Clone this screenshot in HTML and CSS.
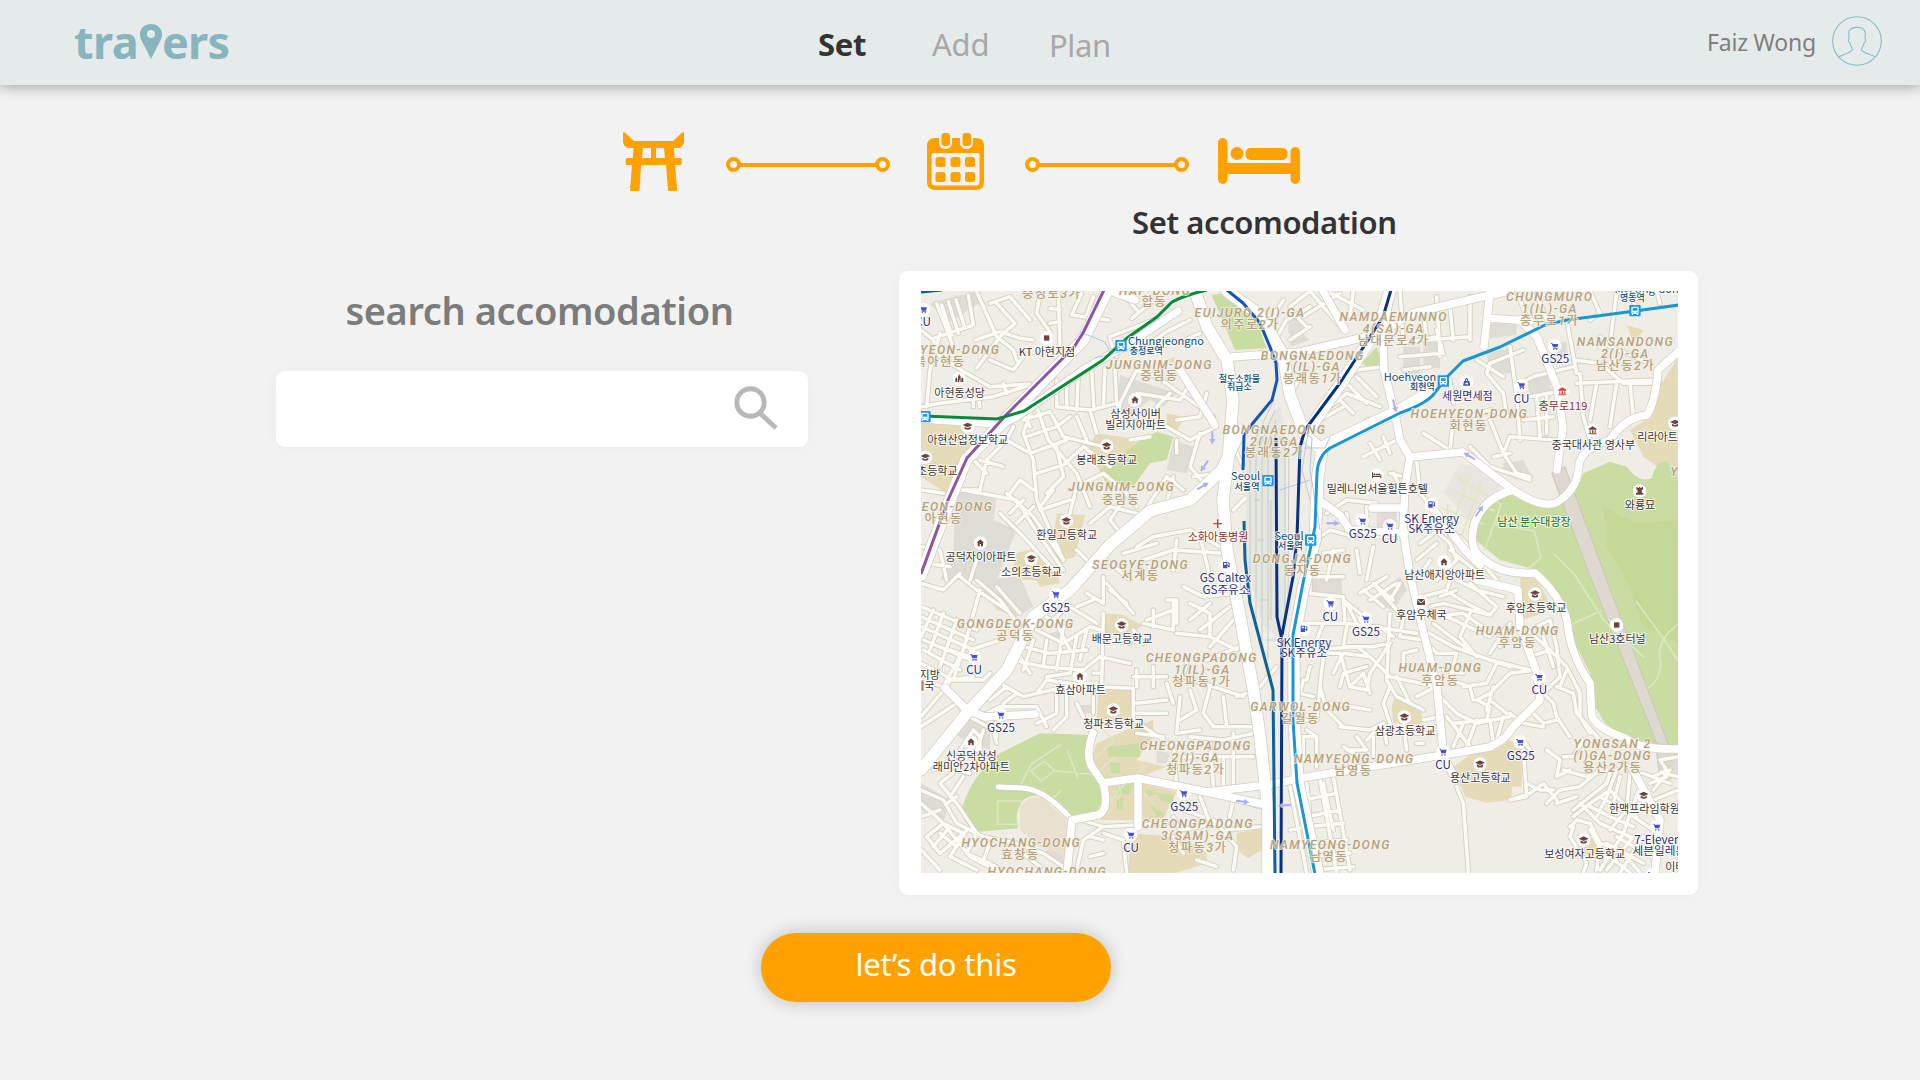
FILE: index.html
```html
<!DOCTYPE html>
<html lang="en">
<head>
<meta charset="utf-8">
<title>travers – Set accomodation</title>
<link rel="stylesheet" href="styles.css">
</head>
<body>
<header class="topbar">
  <a class="logo" aria-label="travers"><span class="logo-a">tra</span><svg class="pin" viewBox="0 0 22 36"><path fill-rule="evenodd" d="M11 0C4.500 0 0 4.600 0 10.500 0 15 3 19 5.500 24L11 35 16.500 24C19 19 22 15 22 10.500 22 4.600 17.500 0 11 0ZM11 6a4 4 0 1 1 0 8 4 4 0 0 1 0-8Z"/></svg><span class="logo-b">ers</span></a>
  <nav class="tabs"><a class="tab active">Set</a><a class="tab add">Add</a><a class="tab plan">Plan</a></nav>
  <div class="user"><span class="user-name">Faiz Wong</span>
    <svg class="avatar" viewBox="0 0 50 50"><circle cx="25" cy="25" r="24.300"/><path d="M7 41C10 38 18 38 20.500 33.500 20 31 18.500 30 18 27 16 26 16 23 17 22 17 18 15.500 15 18 14 20 11 29 10 32 14 34.500 16 33 19 33 22 34 23 34 26 32 27 31.500 30 30 31 29.500 33.500 31 38 40 38 43 41"/></svg></div>
</header>
<main>
  <section class="steps">
    <div class="step-row">
      <svg class="torii" viewBox="0 0 61 59"><path d="M0 0.500Q1.500-.5 3 1.500L11 9H50L58 1.500Q60-.5 61 .5V10Q60 16 54 16H51L51.700 26H58Q58.700 26 58.700 27V31.500Q58.700 33 57 33H52L54.200 58Q54.200 59 53 59H46Q45 59 45 58L43 33H18L16.500 58Q16.500 59 15.500 59H8Q7 59 7 58L9 33H4Q2.700 33 2.700 31.500V27.500Q2.700 26 4 26H9.700L10.500 16H7Q1 16 0 10ZM20 16L19 26H28V16ZM33 16V26H42L41 16Z" fill-rule="evenodd"/></svg>
      <svg class="link" viewBox="0 0 164 15"><path d="M12 8H152"/><circle cx="7.500" cy="7.500" r="5.500"/><circle cx="156.500" cy="7.500" r="5.500"/></svg>
      <svg class="calendar" viewBox="0 0 57 57"><path fill-rule="evenodd" d="M8 5H12V9Q12 16 18.500 16T25 9V5H33V9Q33 16 39.500 16T46 9V5H49Q57 5 57 13V49Q57 57 49 57H8Q0 57 0 49V13Q0 5 8 5ZM7 20Q4.500 20 4.500 22V49Q4.500 52.500 8 52.500H49Q52.500 52.500 52.500 49V22Q52.500 20 50.500 20Z"/><rect x="14.500" y="0" width="8.500" height="13" rx="3"/><rect x="35.500" y="0" width="8.500" height="13" rx="3"/><g><rect x="8.500" y="24" width="10" height="10" rx="2.500"/><rect x="23.500" y="24" width="10" height="10" rx="2.500"/><rect x="38" y="24" width="10" height="10" rx="2.500"/><rect x="8.500" y="39" width="10" height="10" rx="2.500"/><rect x="23.500" y="39" width="10" height="10" rx="2.500"/><rect x="38" y="39" width="10" height="10" rx="2.500"/></g></svg>
      <svg class="link" viewBox="0 0 164 15"><path d="M12 8H152"/><circle cx="7.500" cy="7.500" r="5.500"/><circle cx="156.500" cy="7.500" r="5.500"/></svg>
      <svg class="bed" viewBox="0 0 82 46"><rect width="9.500" height="46" rx="4.700"/><rect x="72.500" y="9" width="9.500" height="37" rx="4.700"/><rect x="5" y="25" width="72" height="11"/><circle cx="19" cy="15.500" r="6.500"/><rect x="27.500" y="10" width="42" height="12" rx="5"/></svg>
    </div>
    <h1 class="step-title">Set accomodation</h1>
  </section>
  <section class="content">
    <div class="search">
      <h2>search accomodation</h2>
      <div class="search-box"><svg viewBox="0 0 44 44"><circle cx="16.500" cy="16.500" r="13.700"/><path d="M27 28L42 42"/></svg></div>
    </div>
    <div class="map-card">
<svg class="map" viewBox="0 0 2271 1746">
<defs>
  <g id="streets">
    <g transform="translate(-93 -93)">
      <path d="M190 260L140 130M130 235L250 195L235 105M155 135L185 225M175 125L205 220M198 120L225 205M260 95L320 230L370 270L380 300M255 240L330 215L390 235L430 240M300 130L360 110L420 180M320 130L375 190L330 230L260 325M110 440L120 330L150 220M230 340L300 380L420 372M230 340L150 290L130 240L93 210M300 300L370 330L400 290M505 100L510 260M575 100L545 165L655 180M610 110L590 165M480 145L510 150M480 190L510 185M450 100L440 160L480 215M700 100L740 150M725 175L780 130M660 230L740 200L800 175M780 250L830 215L900 180M860 250L930 220M680 290L660 240M93 440L150 430L310 410L420 375M270 440L260 390M350 400L340 370M250 440V400"/>
      <path d="M430 430L400 520L430 600L440 720L520 900M440 440L475 540L560 640L600 740M500 360V440L600 450L680 430L675 330M530 360V445M565 340L560 450M605 330L612 450M645 325L640 440M400 480L480 455L520 530L640 560M410 530L500 500L540 470M420 580L530 540M440 640L520 615L580 560L660 620M470 700L520 650L500 560M540 760L560 680L640 640L700 690L740 740M450 750L540 720M600 790L660 740L740 760M520 900L430 770L350 700M600 450L620 520M680 430L700 480L830 500M680 500L690 430L740 330L800 350L970 470M740 400L870 420L900 370M800 440L840 400M830 500L900 540L980 500M860 480L930 470L950 400M720 540L780 530M560 470L590 540M380 420L420 500"/>
      <path d="M210 690L270 690L290 600L350 540L420 580M270 600L340 620M290 640L250 600M350 540L370 500M220 690L380 720L430 800L520 930M360 700L390 660L430 690M360 760L400 720M380 790L430 740M330 760L410 840L500 940M93 690L160 700M93 860L150 870L170 960M110 910L180 920M240 960L260 900M450 740L490 690M700 720L660 780L700 830L760 780M760 760L830 650L880 690M830 730L850 650M930 520L900 620L950 680M910 650L980 640M860 540V580M740 860L790 830L900 810L990 860M700 880L800 850M760 900L850 870L1000 880M860 840L850 930M930 830L960 950M650 900L720 960M560 870L600 910M1030 750L1080 700V640M1030 560L1070 640M1150 250L1190 180L1260 140M1130 200L1180 120M1200 240L1260 200"/>
    </g>
    <g transform="translate(1107 -93)">
      <path d="M60 93L160 210M110 93L220 150M40 170L150 100M0 140L60 93M190 93L180 170M330 93L340 250M440 110L450 290M400 150L410 240L540 230M480 140L490 240M540 110V240M340 250L440 230M330 290L460 280L440 210M340 330L420 320M680 93L720 200M740 100L770 180M900 93L930 160L900 180M980 100L960 250M1010 100L1040 140M1100 93L1110 130M830 180L860 340M850 300L930 310L1000 370H1110M730 350L850 320M690 370L740 345M720 410L800 395M860 370L1100 360M870 340L880 470L900 540M920 370L900 480M980 370L960 500M1020 370L1030 470M930 230L960 260L1080 310M600 310L590 340L640 400L650 470M660 260L680 410L690 540M560 300L640 350M480 360L490 430M540 470L600 450L660 470M600 480L640 580L680 640L720 650M640 580L660 530L800 540M740 410L750 530M700 480L790 470M770 400V520M540 560L600 620L720 660M610 590L660 580"/>
      <path d="M110 410L200 330L280 320M120 440L170 400L270 440M140 410L190 460M170 370L230 430M200 350L260 410M90 480L160 440M220 590L320 540M240 550L270 600M280 530L300 580M300 640L340 650M310 640L340 700M110 760L170 720L260 730M90 830L120 810L190 830L340 830M170 760L180 830M100 880L160 870M110 960L130 870M230 830V740H340M250 740H340M400 780L480 850L500 900L440 960M380 600L390 700L480 800M390 850L460 800M380 900L440 850M480 870L590 960M510 830L620 960M380 960L420 900M230 960L250 860M200 870L210 940M400 520L480 570L490 480M600 310L700 270M230 480L300 470M0 150L50 200M0 410L30 350"/>
    </g>
    <g transform="translate(-93 837)">
      <path d="M93 40L160 60L210 10M93 110L260 180M93 140L250 210M93 170L240 235M100 210L230 265M100 240L210 300M93 280L190 330M160 130L120 240M200 150L150 290M240 175L190 330M130 120L93 200M270 60L220 240L160 350M260 30L330 90L390 170M320 50L390 130M210 20L260 60L350 120M250 320L180 330L170 350L225 435M170 350L93 440M93 470L200 400M160 350L93 330M240 240L330 210M180 240L240 260M190 330L280 330L300 310M450 130L500 160L540 240M440 180L520 220L600 170L630 180M400 230L480 250L590 240M370 270L460 290L580 300L630 260M390 260L420 310M430 210L400 300M470 210L460 290M520 170L500 300M560 200L540 310M590 180L570 270M540 110L620 160M590 70L640 100V20M560 110L610 90M660 60L710 100M480 160L530 110M650 40L730 130M330 340L400 380L440 370L580 340H620M350 350L300 390M340 400L380 370M270 440L330 410H440L470 470M440 370L470 330L610 350V430M500 360V430L440 460M530 360V440L490 480M560 400L580 440M470 320L540 310"/>
      <path d="M640 130L635 350M610 310H630M620 350L730 355V450M630 260L720 280M660 210L720 220M730 180L760 220M760 160L850 180M790 120V170M850 90V180M770 150L850 120M830 90H860V160M730 320H830M740 300V350M790 290V350M830 340L850 400M740 400L830 390M740 430H830M860 190L960 200L1040 240M900 100L960 130V200M900 150L960 100M930 180L1020 110M960 230L1030 150M880 50L940 80L1030 70M950 270L1050 230M890 280L880 320L1060 380M870 380L860 490L930 480M900 360L920 420L870 450M960 350L940 430L970 470H1090M1000 380L1010 470M900 500L1000 510L1090 490M730 450L850 530M740 490L820 500M850 520L860 650M880 560L1090 560M960 520L970 650M1030 490V640M840 520H890M900 600H1000M1000 570V650M1110 350L1160 290M1040 380L1100 360M540 740L640 770L830 760M640 770L580 810L560 900M640 790L700 810L710 908M600 800L640 810M600 860L640 850M850 740L870 780L990 760M880 720L940 740M930 680L960 760M1030 690L1010 780L1110 770M1040 690L1110 710M970 750L1040 830L1030 900M920 870L980 890M850 800L880 850"/>
      <path d="M93 660L160 690L200 760L280 800L380 820L460 850L520 890M150 640L200 700L260 790M93 700L160 760L240 860L330 908M130 600L250 530M200 600L150 640M220 620L180 680M240 610L200 600M170 700L200 680M160 760L220 790L150 850L110 800L160 760M150 790L200 830M180 770L130 830M230 780L180 860L260 900M260 790L230 850L300 880M210 540L250 480L270 500V540M240 440L310 480L320 520M280 480L260 540M320 440V500M93 740L150 720M93 840L150 900M300 820L280 870L350 908M400 850L450 890"/>
    </g>
    <g transform="translate(1107 837)">
      <path d="M50 70L160 80L165 160H40M60 70V20H160M100 160L80 210M165 160L250 170L380 190M170 170L160 230L250 230M200 160L170 100M160 90L210 130M210 70L290 20M220 60L280 110M240 90L320 40M260 50L310 90M250 40L320 120M300 130L290 330M330 40L300 90M340 140L330 200L400 210M250 230L300 220M310 200L270 170M400 80L470 60L480 30M450 80L500 60M500 30L560 60L640 80M480 70L530 100L600 135M540 40L620 110L600 135L460 100M420 110L460 100M420 140L520 130L590 180M400 180L490 230L600 270L720 300M400 210L440 250L500 250M430 160L550 250M470 140L600 200M630 230L660 160M600 250L650 170M540 130L510 200L560 260M600 270L660 290M380 240L340 250V300M500 250L480 330L540 350L550 390M460 300L520 310M520 350L590 340L620 280M560 390L600 370L660 310L740 300M590 420L610 350M600 390L650 430M560 390L600 410L590 450L490 460M450 380L500 430L560 460L660 440M500 480L540 530M520 460L490 530M560 450L530 530M600 450L610 520M640 440L620 510M660 430L700 460L760 470M720 420L760 460L800 450M740 170L780 150L800 230L810 320L760 370M780 240L720 260M760 200L790 290M700 170L780 240M760 220L830 290L870 370L870 440L900 490M800 350L850 370L860 430L930 510M830 300L810 350M760 370L790 400L800 440L840 500"/>
      <path d="M40 330L30 370L70 380M60 290L50 330M80 220L100 260L90 350L110 420L160 470M110 250H150L180 350M60 240L200 230L240 260M130 310L160 250L240 260M150 350L160 310L230 290M180 350L220 310L240 370M120 400L240 420M300 220L240 310L230 360L180 350M240 260L300 320L440 350M290 330L320 380L400 420M320 320L360 400M300 350L280 400L300 460M90 350L80 450L40 450M50 480L80 500V590M150 470L240 480L280 460L290 520M200 500L230 540L170 540M280 460L230 510M340 460L350 540M370 490L450 490M380 520H400M400 450L450 440M190 550L160 530M250 500V560M40 510V570M20 500H80M470 440L510 490L540 530M380 380L440 350M130 620L180 900M90 630L140 908M50 640L60 740M40 690L140 670M50 740L150 720M50 770L160 760M60 820L170 810M60 860L180 850M70 900L190 890M100 640L130 780M0 650L50 908M0 780L50 770M500 650L520 700L535 908"/>
      <path d="M700 540L710 680L660 690M660 690L720 670L760 640L800 690M700 510L720 540M770 540L810 570L800 620L840 600M820 560H850M770 700L810 660L870 650L940 590M790 660L750 660L710 640M860 680L800 700M850 560L880 510M820 600L890 620L950 600M850 720L950 640L960 610M850 740L900 700L960 660M870 700L930 760L1020 800M900 710L960 740L1030 770M930 680L1000 720L1090 780M960 660L1040 740M980 600L950 680L920 740M990 620L970 700M1020 610L1010 720L960 780M1050 650L1000 790M840 770L860 750L900 760L930 820L990 840M850 770L840 800L890 880L880 908M900 780L950 870M930 820L920 900M1000 790L930 900M1030 800L950 900M1060 800L990 908M950 820L1060 880M960 860L1020 908M980 800L1100 870M1000 850L1050 908M1090 620L1130 600L1110 570L1164 560M1060 610L1140 640M1080 640L1130 620M1090 660L1140 600M1090 690L1164 660M1090 720L1164 700M1120 610L1164 620M1000 580L1050 610"/>
    </g>
  </g>
  <g id="avenues" transform="scale(3) translate(-921 -291)">
    <path d="M1390 291L1383 340L1384 370L1395 415L1400 440L1410 457L1405 487L1403 530L1410 575L1423 630L1437 687L1443 750"/>
    <path d="M1410 457L1463 452L1513 490Q1547 512 1560 500Q1578 488 1579 465Q1580 450 1610 440Q1625 417 1647 415Q1656 400 1658 370L1678 352"/>
    <path d="M1513 490Q1485 497 1475 522Q1467 548 1482 558Q1500 575 1535 573Q1560 595 1567 620Q1570 655 1590 683L1592 717Q1600 730 1625 738Q1640 750 1678 749"/>
    <path d="M1557 470L1563 427L1557 387L1537 337L1520 320M1487 318L1530 321M1490 291L1484 347M1110 291L1135 300M1233 357L1300 352L1370 336M1385 330L1413 313L1477 298L1510 291M1323 291L1345 330M1178 311L1127 345L1083 370L1027 410M921 419L1000 424Q1020 418 1030 405"/>
    <path d="M1103 783L1137 778L1207 792L1262 804M1207 792L1267 785L1307 777L1443 755L1490 747Q1505 740 1512 728L1540 700L1537 673L1520 627L1518 590L1477 580M1093 733Q1085 755 1092 767L1103 783Q1110 810 1098 815L1072 820L1067 873M1138 783V827M1633 770L1660 820L1655 873M967 710L985 717L1035 714M945 688L967 710M1180 370L1215 425"/>
    <path d="M1317 470L1319 500L1340 515L1350 530L1405 533M1372 508L1403 508M1430 505L1465 550L1480 565M1443 755L1456 780"/>
  </g>
  <g id="trunks" transform="scale(3) translate(-921 -291)">
    <path d="M1107 291L1083 340L1010 415L966 460L946 510L921 575M1195 291L1207 327L1227 360L1233 400L1228 460L1223 500L1227 550L1235 590L1253 687L1260 737L1268 810V873M1240 430L1222 470L1190 500L1150 511L1110 545L1070 590L1033 617L1007 670L967 713L921 770M1227 291L1260 315L1283 355L1290 395L1305 435L1322 450L1318 475L1315 540L1303 590L1294 640V720L1298 783L1318 873M1322 447L1400 410L1430 392M1390 291L1380 325L1340 385L1305 435"/>
  </g>
  <g id="lanes" transform="scale(3) translate(-921 -291)"><path d="M1072 820Q1045 789 1022 788L998 787"/></g>
  <g id="cap"><circle r="20" class="halo"/><path d="M-15-4L0-11L15-4L0 3ZM-9 1V8Q0 13 9 8V1L0 6Z"/></g>
  <g id="cart"><circle r="20" class="halo"/><path d="M-12-9H-7L-6-6H11L8 4H-5L-9-7H-12ZM-5 6H9V8H-5Z"/><circle cx="-3" cy="10" r="2"/><circle cx="6" cy="10" r="2"/></g>
  <g id="home"><circle r="20" class="halo"/><path d="M0-11L11-1H8V10H2V3H-2V10H-8V-1H-11Z"/></g>
  <g id="square"><circle r="20" class="halo"/><path d="M-8-8H8V8H-8Z"/></g>
  <g id="mail"><circle r="20" class="halo"/><path d="M-12-9H12L0 1ZM-12-6L0 4L12-6V9H-12Z"/></g>
  <g id="hotel"><circle r="20" class="halo"/><path d="M-14-9H-11V1H11V-3H14V9H11V5H-11V9H-14ZM-3-5H10V-1H-3Z"/><circle cx="-7" cy="-3" r="3"/></g>
  <g id="bag"><circle r="20" class="halo"/><path fill-rule="evenodd" d="M-8-3H-5Q-5-12 0-12T5-3H8L11 11H-11ZM-2-3H2Q2-8 0-8T-2-3ZM-4 2V7H4V2Z"/></g>
  <g id="rook"><circle r="20" class="halo"/><path d="M-10-12H-6V-9H-2V-12H2V-9H6V-12H10V-4H6L7 6H11V11H-11V6H-7L-6-4H-10Z"/></g>
  <g id="church"><circle r="20" class="halo"/><path d="M0-13L4-6V10H1V3H-1V10H-4V-6ZM-12 0L-9-4L-6 0V10H-12ZM6 0L9-4L12 0V10H6Z"/></g>
  <g id="fuel"><circle r="20" class="halo"/><path fill-rule="evenodd" d="M-9-10H4V0H8V-5L5-8L7-10L11-6V5H6V2H4V9H-9ZM-6-7V-2H1V-7Z"/></g>
  <g id="hall"><circle r="20" class="halo"/><path d="M0-13L12-6V-3H-12V-6ZM-9-1H-6V7H-9ZM-2-1H2V7H-2ZM6-1H9V7H6ZM-12 8H12V11H-12Z"/></g>
  <g id="train"><rect x="-17" y="-17" width="34" height="34" rx="3" fill="#1c97ea"/><path fill="#fff" fill-rule="evenodd" d="M-8-12H8Q11-12 11-8V6Q11 9 8 9L11 13H7L4 10H-4L-7 13H-11L-8 9Q-11 9-11 6V-8Q-11-12-8-12ZM-7-8V0H7V-8ZM-8 3V6H-4V3ZM4 3V6H8V3Z"/></g>
  <g id="arrow"><path d="M-20-3H4V-9L20 0L4 9V3H-20Z"/></g>
</defs>
<rect width="2271" height="1746" fill="#f0ede6"/>

<g class="areas" transform="translate(-93 -93)">
  <path class="grey" d="M120 130L250 95L270 130L170 190ZM200 690L320 715L310 780L380 810L320 960H150L190 870ZM690 345L860 400L820 440L780 420L700 480L680 440ZM850 540L910 560L890 640L830 630ZM1195 165L1250 190L1240 235L1195 220Z"/>
  <path class="tan" d="M93 490L240 500L245 570L170 700L93 650ZM620 520L755 540L740 590L640 650L590 570ZM830 460L880 470L860 520L830 500ZM500 760L585 765L555 890L505 905L490 830ZM380 880L430 865L500 960H400L370 920ZM830 300L855 290L850 310Z"/>
  <path class="green" d="M755 540L800 515L850 530L830 600L780 610L730 680L650 675L630 630ZM965 105L1030 95L1085 140L1130 265L1035 270Z"/>
</g>
<g class="areas" transform="translate(1107 -93)">
  <path class="grey" d="M340 260H390V350H340ZM400 240L450 240V325H400ZM600 190L680 185V225L600 235ZM590 280L660 265L665 340H600ZM710 350L775 345L785 390L720 410ZM800 250L830 245V290H800ZM640 610L700 600L720 640L680 660L640 640ZM260 755L320 750V810H260ZM0 190L60 240L0 260Z"/>
  <path class="tan" d="M1164 290V680L1130 640L1060 590L1020 510L1080 470L1110 380ZM1010 195L1060 210L1030 250Z"/>
  <path class="pale" d="M510 610L600 630L640 660L560 800L460 700Z"/>
  <path class="green" d="M545 830Q550 740 620 705L690 700L780 745L850 710L880 640L960 605L1010 620Q1045 670 1085 655Q1100 600 1130 605L1164 650V1470L1050 1460L945 1390L915 1340L900 1240L850 1140L800 1000L740 930L630 900ZM215 310L260 260L275 310L240 325Z"/>
  <path class="green2" d="M1164 780V1150L1060 1100L1010 960L950 860L940 740L1040 790Z"/>
  <path class="tunnel" d="M785 640L825 620L950 960L1137 1460L1100 1450L895 935Z"/>
  <path class="tunnel" d="M1100 1480L1164 1460V1500L1110 1560Z"/>
</g>
<g class="areas" transform="translate(-93 837)">
  <path class="grey" d="M260 30L390 20L430 110L380 140L320 120ZM480 190L520 180L530 200L510 220ZM565 405H610V430H565ZM93 640L180 690L160 760L93 720ZM190 490L250 440L300 480V540L240 520ZM800 540L840 550L830 580H800ZM450 850L520 820V890Z"/>
  <path class="tan" d="M645 130L700 135L755 165L720 200L640 190ZM625 355L725 360V450L620 470ZM620 520L720 475L790 450V500L740 570L830 590L750 620L640 630L600 580ZM650 650L735 640V750H630ZM755 640L860 665L820 745L760 750ZM720 790L870 800L950 850V880L860 908H715ZM1040 790L1115 775V840L1075 865L1040 840ZM420 0H500L510 40L450 50Z"/>
  <path class="sand" d="M390 730Q400 670 460 685L530 750V860L450 830L390 780Z"/>
  <path class="green" d="M215 720Q240 620 330 550L450 490L610 495Q580 560 630 640Q650 720 600 735L545 740L500 700Q440 660 400 690Q370 730 385 775L270 785Q220 770 215 720ZM650 530L755 520L750 560H655ZM660 575L690 580V610H660ZM680 650L730 640L720 670L680 680ZM680 690L700 680V720H680ZM765 655L800 670L775 680ZM800 670L850 675V705L810 690ZM780 705L830 735L800 740Z"/>
</g>
<g class="areas" transform="translate(1107 837)">
  <path class="grey" d="M60 20H155V75H60ZM230 90L330 20L350 60L310 120ZM1110 640L1164 560V620Z"/>
  <path class="tan" d="M320 365L395 425V465L310 460L305 410ZM690 10L740 30L775 90L760 130L695 150ZM640 500L695 530V650H665V690L590 698L525 680L490 590L560 540ZM860 790L940 820L920 870L880 850Z"/>
</g>
<g class="parkpath">
  <path d="M400 1440L520 1450L580 1400M440 1380L470 1460M300 1480L330 1420L420 1360M540 1310L580 1350L500 1420M560 1550L590 1500L680 1420M350 1560L420 1500M640 1480L700 1540M1950 1000L2040 960M2145 930L2240 1060L2271 1110M1900 790L1960 850L2050 990L2170 1100M1560 650L1690 700M1580 640L1580 800L1740 860M1610 560L1740 640L1690 780M1600 600L1720 660M1640 560L1590 720M1680 580L1620 740M1720 700L1840 720L1860 800L1780 870M2271 1000Q2200 1050 2220 1120Q2210 1180 2180 1190"/>
  <path d="M230 1530H300V1600H230ZM330 1440L370 1410L400 1440L360 1470ZM540 1490L590 1470L600 1510L560 1530Z"/>
</g>
<use href="#streets" class="street-case"/>
<use href="#streets" class="street-fill"/>
<use href="#lanes" class="lane-case"/>
<use href="#lanes" class="lane-fill"/>
<use href="#avenues" class="avenue-case"/>
<use href="#trunks" class="trunk-case"/>
<use href="#avenues" class="avenue-fill"/>
<use href="#trunks" class="trunk-fill"/>

<g transform="scale(3) translate(-921 -291)">
  <path fill="#e5e6e0" d="M1268 420L1280 405L1286 440V620L1282 640L1262 625L1246 560V450Z"/>
  <path class="track" d="M1274 400L1250 450V590M1275 410L1256 455V620M1276 420L1262 460V640M1277 430L1268 460V660M1285 440V620M1289 440L1288 600M1246 480H1252M1254 500H1260M1262 480H1268M1258 540H1264M1264 560H1272M1260 600H1268M1266 640H1276M1271 500V620M1310 420L1302 470L1310 500"/>
  <path class="hair" d="M1300 430L1312 438L1310 470L1320 530M1304 448H1325L1330 437M1280 490L1310 480M1080 332L1105 342L1110 352M1095 358L1120 352"/>
  <path class="rail purple" d="M1104 290L1083 333L1074 347L1007 414L967 458L948 500L921 574"/>
  <path class="rail green-line" d="M924 416L997 419L1024 411L1103 360L1127 338L1157 317L1172 302Q1185 295 1207 290"/>
  <path class="rail blue" d="M921 292L942 290M1227 290L1243 303L1260 323L1270 347L1276 363L1277 380L1272 400L1253 423L1244 435L1243 470"/>
  <path class="rail teal" d="M1244 521L1245 560L1250 603L1273 690L1275 873"/>
  <path class="rail navy" d="M1276 438L1277 617L1282 640L1281 873M1391 290L1383 317L1340 383L1305 430L1300 447L1297 537L1293 577L1282 635"/>
  <path class="rail cyan" d="M1679 305L1635 311L1567 320L1545 325L1500 347L1463 361L1447 377L1433 395Q1425 404 1400 413L1330 448Q1318 456 1317 473L1315 527L1303 583L1293 635V720L1297 783L1315 874"/>
</g>
<g fill="#a9aff0">
  <use href="#arrow" transform="translate(874 440) rotate(90)"/><use href="#arrow" transform="translate(850 525) rotate(125)"/><use href="#arrow" transform="translate(846 585) rotate(-30)"/>
  <use href="#arrow" transform="translate(1421 345) rotate(75)"/><use href="#arrow" transform="translate(1645 495) rotate(210)"/><use href="#arrow" transform="translate(1675 660) rotate(-55)"/><use href="#arrow" transform="translate(1236 697)"/>
  <use href="#arrow" transform="translate(965 1532) rotate(8)"/><use href="#arrow" transform="translate(1090 1543) rotate(175)"/>
</g>

<g class="district" transform="translate(-93 -93)">
  <text x="485" y="115">중성로3가</text><text x="795" y="104">HAP-DONG</text><text x="793" y="137">합동</text>
  <text x="1080" y="172">EUIJURO 2(I)-GA</text><text x="1080" y="208">의주로2가</text>
  <text x="196" y="282">HYEON-DONG</text><text x="150" y="318">북아현동</text>
  <text x="808" y="326">JUNGNIM-DONG</text><text x="808" y="361">중림동</text>
  <text x="695" y="694">JUNGNIM-DONG</text><text x="693" y="731">중림동</text>
  <text x="175" y="752">HYEON-DONG</text><text x="161" y="789">아현동</text>
  <text x="752" y="926">SEOGYE-DONG</text><text x="751" y="960">서계동</text>
  <text x="1153" y="521">BONGNAEDONG</text><text x="1153" y="557">2(I)-GA</text><text x="1153" y="592">봉래동2가</text>
  <text x="1268" y="299">BONGNAEDONG</text><text x="1268" y="334">1(IL)-GA</text><text x="1268" y="370">봉래동1가</text>
  <text x="1237" y="908">DONGJA-DONG</text><text x="1237" y="944">동자동</text>
</g>
<g class="district" transform="translate(1107 -93)">
  <text x="311" y="182">NAMDAEMUNNO</text><text x="311" y="218">4(SA)-GA</text><text x="311" y="254">남대문로4가</text>
  <text x="779" y="123">CHUNGMURO</text><text x="779" y="160">1(IL)-GA</text><text x="779" y="196">충무로1가</text>
  <text x="1006" y="258">NAMSANDONG</text><text x="1006" y="294">2(I)-GA</text><text x="1006" y="330">남산동2가</text>
  <text x="538" y="473">HOEHYEON-DONG</text><text x="536" y="509">회현동</text><text x="1154" y="648">Y</text>
</g>
<g class="district" transform="translate(-93 837)">
  <text x="377" y="174">GONGDEOK-DONG</text><text x="376" y="209">공덕동</text>
  <text x="935" y="275">CHEONGPADONG</text><text x="937" y="312">1(IL)-GA</text><text x="935" y="347">청파동1가</text>
  <text x="917" y="539">CHEONGPADONG</text><text x="917" y="575">2(I)-GA</text><text x="917" y="611">청파동2가</text>
  <text x="923" y="773">CHEONGPADONG</text><text x="923" y="809">3(SAM)-GA</text><text x="923" y="845">청파동3가</text>
  <text x="394" y="830">HYOCHANG-DONG</text><text x="391" y="866">효창동</text><text x="472" y="918">HYOCHANG-DONG</text>
  <text x="1232" y="422">GARWOL-DONG</text><text x="1232" y="458">갈월동</text>
</g>
<g class="district" transform="translate(1107 837)">
  <text x="683" y="196">HUAM-DONG</text><text x="683" y="232">후암동</text>
  <text x="451" y="307">HUAM-DONG</text><text x="451" y="344">후암동</text>
  <text x="193" y="579">NAMYEONG-DONG</text><text x="190" y="615">남영동</text>
  <text x="121" y="837">NAMYEONG-DONG</text><text x="117" y="873">남영동</text>
  <text x="968" y="533">YONGSAN 2</text><text x="968" y="570">(I)GA-DONG</text><text x="968" y="606">용산2가동</text>
</g>

<g class="poi" transform="translate(-93 -93)">
  <use href="#square" x="470" y="234"/><text x="471" y="287">KT 아현지점</text>
  <use href="#church" x="208" y="356"/><text x="209" y="411">아현동성당</text>
  <use href="#cap" x="233" y="499"/><text x="233" y="552">아현산업정보학교</text>
  <use href="#cap" x="106" y="592"/><text x="142" y="646">초등학교</text>
  <use href="#home" x="735" y="420"/><text x="737" y="474">삼성사이버</text><text x="737" y="507">빌리지아파트</text>
  <use href="#cap" x="650" y="558"/><text x="650" y="612">봉래초등학교</text>
  <use href="#cap" x="529" y="783"/><text x="530" y="836">환일고등학교</text>
  <use href="#home" x="271" y="849"/><text x="273" y="902">공덕자이아파트</text>
  <use href="#cap" x="424" y="896"/><text x="424" y="949">소의초등학교</text>
  <g class="red"><path d="M981 778H985V789H996V793H985V804H981V793H970V789H981Z"/><text x="984" y="844">소화아동병원</text></g>
  <g class="shop"><use href="#cart" x="100" y="148"/><text x="99" y="198">CU</text><use href="#fuel" x="1008" y="916"/><text x="1006" y="967">GS Caltex</text><text x="1008" y="1001">GS주유소</text></g>
  <g class="station"><use href="#train" x="693" y="257"/><text x="828" y="256">Chungjeongno</text><text class="sm" x="769" y="283">충정로역</text>
    <text class="sm" x="1048" y="365">철도소화물</text><text class="sm" x="1048" y="391">취급소</text>
    <use href="#train" x="1134" y="662"/><text x="1067" y="661">Seoul</text><text class="sm" x="1071" y="689">서울역</text><use href="#train" x="105" y="470"/>
    <use href="#train" x="1262" y="840"/><text x="1197" y="839">Seoul</text><text class="sm" x="1201" y="866">서울역</text></g>
</g>
<g class="poi" transform="translate(1107 -93)">
  <g class="station"><text x="1079" y="100">Myeong-dong</text><text class="sm" x="1027" y="122">명동역</text><use href="#train" x="1035" y="152"/><use href="#train" x="460" y="363"/><text x="360" y="362">Hoehyeon</text><text class="sm" x="397" y="389">회현역</text></g>
  <g class="shop"><use href="#cart" x="794" y="258"/><text x="796" y="310">GS25</text><use href="#cart" x="694" y="376"/><text x="695" y="428">CU</text><use href="#bag" x="530" y="366"/><text class="ko" x="532" y="420">세원면세점</text>
    <use href="#cart" x="217" y="782"/><text x="218" y="834">GS25</text><use href="#cart" x="299" y="797"/><text x="299" y="849">CU</text><use href="#fuel" x="424" y="734"/><text x="425" y="788">SK Energy</text><text x="425" y="820">SK주유소</text></g>
  <g class="red"><use href="#hall" x="817" y="395"/><text x="819" y="450">충무로119</text></g>
  <use href="#hall" x="908" y="512"/><text x="910" y="568">중국대사관 영사부</text>
  <use href="#cap" x="1155" y="490"/><text x="1118" y="543">리라아트고</text>
  <use href="#rook" x="1049" y="693"/><text x="1050" y="747">와룡묘</text>
  <use href="#hotel" x="260" y="646"/><text x="262" y="699">밀레니엄서울힐튼호텔</text>
  <text class="parkname" x="732" y="797">남산 분수대광장</text>
  <use href="#home" x="462" y="906"/><text x="464" y="958">남산애지앙아파트</text>
</g>
<g class="poi" transform="translate(-93 837)">
  <g class="shop"><use href="#cart" x="497" y="73"/><text x="498" y="126">GS25</text><use href="#cart" x="252" y="261"/><text x="252" y="313">CU</text><use href="#cart" x="332" y="434"/><text x="333" y="487">GS25</text><use href="#cart" x="881" y="670"/><text x="883" y="722">GS25</text><use href="#cart" x="722" y="794"/><text x="723" y="846">CU</text>
    <use href="#fuel" x="1241" y="177"/><text x="1242" y="230">SK Energy</text><text x="1242" y="262">SK주유소</text></g>
  <use href="#cap" x="695" y="165"/><text x="696" y="219">배문고등학교</text>
  <use href="#home" x="570" y="319"/><text x="572" y="373">효삼아파트</text>
  <text x="119" y="328">지방</text><text x="103" y="361">세국</text>
  <use href="#cap" x="670" y="420"/><text x="671" y="474">청파초등학교</text>
  <use href="#home" x="243" y="516"/><text x="244" y="569">신공덕삼성</text><text x="244" y="602">래미안2차아파트</text>
</g>
<g class="poi" transform="translate(1107 837)">
  <g class="shop"><use href="#cart" x="121" y="100"/><text x="121" y="152">CU</text><use href="#cart" x="227" y="146"/><text x="228" y="198">GS25</text><use href="#cart" x="747" y="321"/><text x="748" y="373">CU</text><use href="#cart" x="690" y="516"/><text x="692" y="569">GS25</text><use href="#cart" x="459" y="545"/><text x="459" y="597">CU</text><use href="#cart" x="1100" y="770"/><text x="1103" y="821">7-Eleven</text><text x="1108" y="854">세븐일레븐</text><use href="#cart" x="1086" y="915"/></g>
  <use href="#mail" x="393" y="96"/><text x="394" y="147">후암우체국</text>
  <use href="#cap" x="735" y="72"/><text x="738" y="125">후암초등학교</text>
  <use href="#square" x="980" y="165"/><text x="982" y="219">남산3호터널</text>
  <use href="#cap" x="343" y="441"/><text x="345" y="495">삼광초등학교</text>
  <use href="#cap" x="570" y="582"/><text x="571" y="636">용산고등학교</text>
  <use href="#cap" x="1061" y="676"/><text x="1063" y="729">한맥프라임학원</text>
  <use href="#cap" x="881" y="810"/><text x="884" y="863">보성여자고등학교</text>
  <text x="1156" y="904">이태</text>
</g>
</svg>
    </div>
  </section>
  <button class="cta">let’s do this</button>
</main>
</body>
</html>
```
FILE: styles.css
```css
* { box-sizing: border-box; }
body {
  margin: 0;
  width: 1920px;
  height: 1080px;
  overflow: hidden;
  background: #f2f2f2;
  font-family: "Noto Sans", "Open Sans", sans-serif;
  color: #333;
}
h1, h2 { margin: 0; }
svg { display: block; flex: none; }

.topbar {
  display: grid;
  grid-template-columns: 818px 1fr auto;
  height: 85px;
  background: #e5ebea;
  box-shadow: 0 1px 14px rgba(0, 0, 0, .38);
}
.logo {
  display: flex;
  align-items: flex-start;
  padding: 9px 0 0 74px;
  color: #88b4be;
  font-size: 45px;
  font-weight: 700;
  line-height: 66px;
}
.logo-a { width: 66px; letter-spacing: -.5px; }
.logo-b { letter-spacing: -.8px; }
.pin { width: 22px; height: 36px; margin-top: 15px; fill: #88b4be; }
.tabs {
  display: flex;
  font-size: 31px;
  line-height: 40px;
  padding-top: 24px;
  color: #a8a8a8;
}
.tab.active { width: 114px; color: #333; font-weight: 700; letter-spacing: -.3px; }
.tab.add { width: 117px; letter-spacing: -.2px; }
.tab.plan { padding-top: 1px; letter-spacing: -.4px; }
.user { display: flex; padding: 15px 38px 0 0; color: #7f7f7f; font-size: 23px; }
.user-name { line-height: 54px; width: 125px; white-space: nowrap; letter-spacing: -.2px; }
.avatar { width: 50px; height: 50px; margin-top: 1px; fill: none; stroke: #8dbcc6; stroke-width: 1.1; }

.steps { height: 186px; padding: 47px 0 0 623px; }
.step-row { display: flex; align-items: flex-start; height: 70px; fill: #ffa200; }
.torii { width: 61px; height: 59px; }
.link { width: 164px; height: 15px; margin: 25px 37px 0 42px; fill: none; stroke: #ffa200; stroke-width: 4; }
.calendar { width: 57px; height: 57px; margin-top: 1px; }
.calendar + .link { margin-left: 41px; margin-right: 29px; }
.bed { width: 82px; height: 46px; margin-top: 6px; }
.step-title {
  padding-left: 509px;
  font-size: 31px;
  line-height: 40px;
  font-weight: 600;
  letter-spacing: -.4px;
}

.content {
  display: grid;
  grid-template-columns: 532px 799px;
  column-gap: 91px;
  padding-left: 276px;
}
.search h2 {
  height: 100px;
  padding: 13px 5px 0 0;
  text-align: center;
  font-size: 38px;
  line-height: 52px;
  font-weight: 600;
  letter-spacing: -.4px;
  color: #7c7c7c;
  white-space: nowrap;
}
.search-box {
  display: flex;
  justify-content: flex-end;
  height: 76px;
  padding: 15px 30px 0 0;
  background: #fff;
  border-radius: 9px;
  box-shadow: 0 0 20px rgba(0, 0, 0, .03);
}
.search-box svg { width: 44px; height: 44px; fill: none; stroke: #b8b8b8; stroke-width: 4.900; }
.map-card {
  height: 624px;
  padding: 20px 20px 22px 22px;
  background: #fff;
  border-radius: 9px;
  box-shadow: 0 0 20px rgba(0, 0, 0, .03);
}
.cta {
  display: block;
  width: 350px;
  height: 69px;
  margin: 38px 0 0 761px;
  padding: 0 0 8px;
  border: 0;
  border-radius: 35px;
  background: #ffa200;
  box-shadow: 0 0 18px rgba(0, 0, 0, .22);
  color: #fff;
  font: 400 31px/40px "Noto Sans", "Open Sans", sans-serif;
  letter-spacing: -.2px;
}

.map { width: 757px; height: 582px; overflow: hidden; }
.map path { vector-effect: non-scaling-stroke; }
.grey { fill: #dfdbd5; }
.tan { fill: #e6dbb8; }
.sand { fill: #e9e0d0; }
.pale { fill: #e9e6e0; }
.green { fill: #c9dda2; }
.green2 { fill: #c4d998; }
.tunnel { fill: #ddd8d0; stroke: #cbc5bb; stroke-width: 1px; }
.parkpath { fill: none; stroke: #dde8c3; stroke-width: 1.500px; }
.street-case, .street-fill, .lane-case, .lane-fill, .avenue-case, .avenue-fill, .trunk-case, .trunk-fill {
  fill: none;
  stroke-linejoin: round;
  stroke-linecap: round;
}
.street-case { stroke: #d3d0c0; stroke-width: 5.300px; }
.street-fill { stroke: #fbfbf5; stroke-width: 3.500px; }
.lane-case { stroke: #d3cdc2; stroke-width: 6.500px; }
.lane-fill { stroke: #fff; stroke-width: 5px; }
.avenue-case { stroke: #d3cdc2; stroke-width: 9px; }
.avenue-fill { stroke: #fff; stroke-width: 7.500px; }
.trunk-case { stroke: #d3cdc2; stroke-width: 13px; }
.trunk-fill { stroke: #fff; stroke-width: 11.500px; }
.track { fill: none; stroke: #c6cbc7; stroke-width: 1px; }
.hair { fill: none; stroke: #a9c8e6; stroke-width: 1px; }
.rail { fill: none; stroke-width: 3px; stroke-linejoin: round; }
.purple { stroke: #8d54a2; }
.green-line { stroke: #078a3c; }
.blue { stroke: #1453b8; }
.teal { stroke: #0d6299; }
.navy { stroke: #083184; }
.cyan { stroke: #1a97d2; }
.map text {
  text-anchor: middle;
  paint-order: stroke;
  stroke: rgba(255, 255, 255, .85);
  stroke-width: 6px;
  stroke-linejoin: round;
}
.district text {
  font: italic 500 37px Roboto, "Noto Sans CJK KR", sans-serif;
  font-synthesis: none;
  letter-spacing: 4.200px;
  fill: #b3a27f;
  stroke: rgba(245, 242, 230, .8);
}
.poi { fill: #6b453c; }
.poi text { font: 400 33px "Noto Sans CJK KR", sans-serif; fill: #3a3533; }
.halo { fill: #fff; }
.poi .shop { fill: #4650cf; }
.poi .shop text { font-size: 35px; fill: #2c2f72; }
.poi .shop .ko { font-size: 33px; }
.poi .red { fill: #e0382b; }
.poi .red text { fill: #8c322d; }
.poi .station text { font-size: 33px; fill: #134d73; }
.poi .station .sm { font-size: 27px; font-weight: 500; }
.poi .parkname { fill: #38803a; font-weight: 500; }
```
